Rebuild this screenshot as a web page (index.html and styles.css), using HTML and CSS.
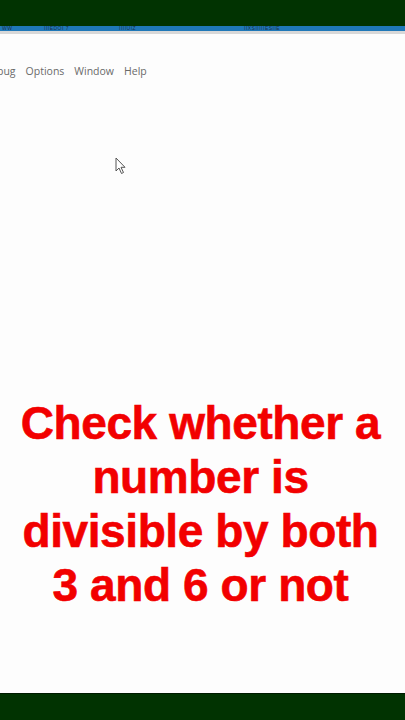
FILE: index.html
```html
<!DOCTYPE html>
<html>
<head>
<meta charset="utf-8">
<link rel="stylesheet" href="styles.css">
</head>
<body>
<div class="frame">
  <div class="topbar"></div>
  <div class="taskstrip">
    <span class="t1">WW</span><span class="t2">IIIEDOI 7</span><span class="t3">IIIIUIZ</span><span class="t4">IIXSIIIIIESIIE</span>
  </div>
  <div class="sep"></div>
  <div class="app">
    <div class="menu">
      <span>bug</span><span>Options</span><span>Window</span><span>Help</span>
    </div>
    <div class="canvas">
      <svg class="cursor" width="12" height="18" viewBox="0 0 12 18">
        <path d="M1 1 L1 14 L4 11 L6.5 16.5 L8.5 15.5 L6 10.3 L10 10.3 Z" fill="#fff" stroke="#555" stroke-width="1"/>
      </svg>
      <h1 class="title"><span class="ln">Check whether a</span> <span class="ln">number is</span> <span class="ln">divisible by both</span> <span class="ln">3 and 6 or not</span></h1>
    </div>
  </div>
  <div class="bottombar"></div>
</div>
</body>
</html>
```
FILE: styles.css
```css
html, body {
  margin: 0;
  padding: 0;
  background: #fdfdfd;
}
.frame {
  width: 405px;
  height: 720px;
  display: flex;
  flex-direction: column;
  overflow: hidden;
  font-family: "Liberation Sans", Arial, sans-serif;
}
.topbar {
  height: 26px;
  background: #013301;
  flex: none;
}
.taskstrip {
  height: 5px;
  background: #1f78b8;
  flex: none;
  display: flex;
  overflow: hidden;
  font-size: 5px;
  line-height: 5px;
  color: #1a2f4a;
  white-space: nowrap;
  letter-spacing: 0.5px;
}
.taskstrip span { display: block; }
.t1 { width: 44px; padding-left: 2px; box-sizing: border-box; }
.t2 { width: 75px; }
.t3 { width: 125px; }
.sep {
  height: 3px;
  background: #d8d8d8;
  flex: none;
}
.app {
  flex: 1;
  display: flex;
  flex-direction: column;
  background: #fdfdfd;
}
.menu {
  display: flex;
  gap: 10px;
  padding: 29px 0 0 0;
  margin-left: -3px;
  font-family: "Open Sans", "Noto Sans", sans-serif;
  font-size: 10.5px;
  color: #6a6a6a;
  height: 17px;
  line-height: 17px;
}
.canvas {
  position: relative;
  flex: 1;
}
.cursor {
  position: absolute;
  left: 115px;
  top: 77px;
}
.title {
  margin: 316px 0 0 0;
  text-align: center;
  color: #f20000;
  -webkit-text-stroke: 0.6px #f20000;
  font-family: "Liberation Sans", Arial, sans-serif;
  font-weight: bold;
  font-size: 46px;
  line-height: 54px;
  letter-spacing: -0.4px;
  padding: 0 4px 0 0;
}
.ln {
  display: block;
  white-space: nowrap;
}
.bottombar {
  height: 26px;
  background: #013301;
  border-top: 1px solid #001a00;
  flex: none;
}
```
